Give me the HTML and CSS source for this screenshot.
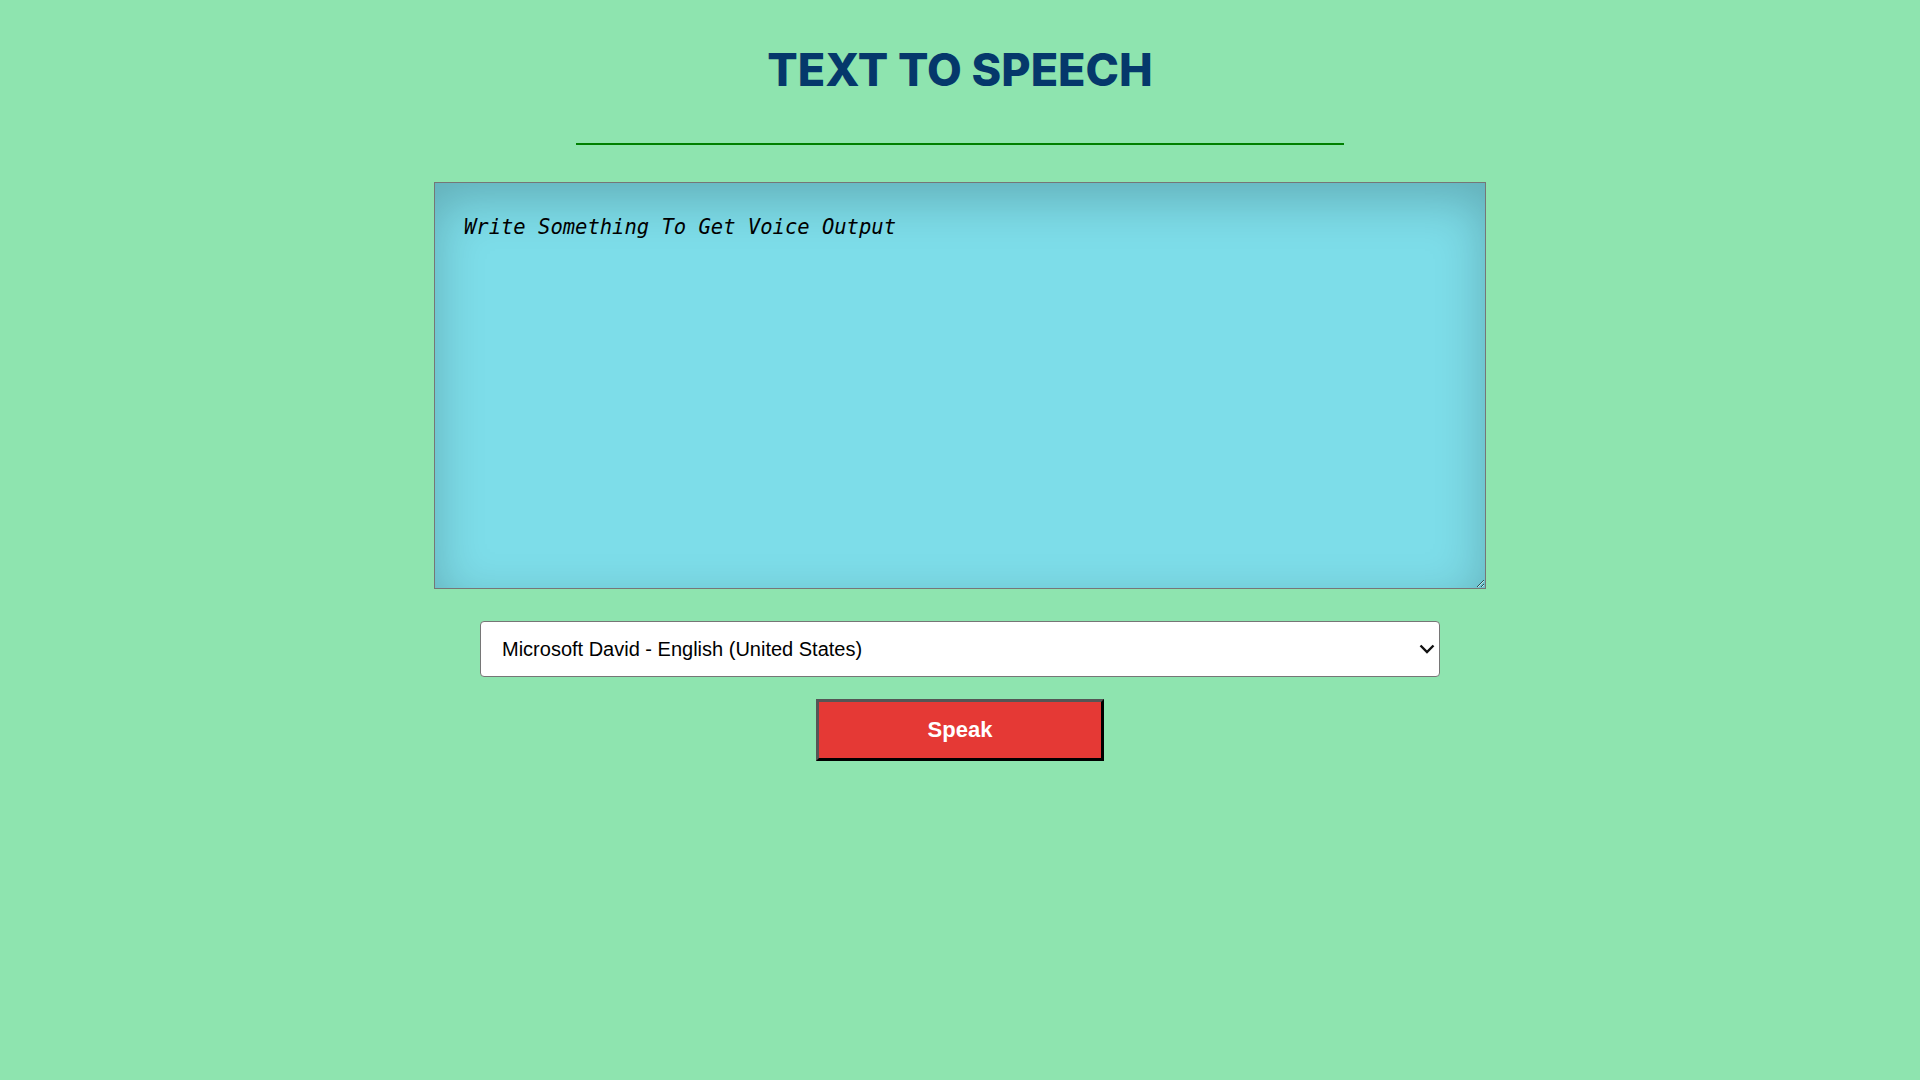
FILE: index.html
```html
<!DOCTYPE html>
<html lang="en">
<head>
<meta charset="utf-8">
<title>Text To Speech</title>
<link rel="stylesheet" href="styles.css">
</head>
<body>
<main class="app">
  <h1 class="title">TEXT TO SPEECH</h1>
  <hr class="divider">
  <textarea class="input" placeholder="Write Something To Get Voice Output"></textarea>
  <div class="select-wrap">
    <select class="voice">
      <option>Microsoft David - English (United States)</option>
      <option>Microsoft Mark - English (United States)</option>
      <option>Microsoft Zira - English (United States)</option>
    </select>
    <svg class="chevron" width="16" height="10" viewBox="0 0 16 10" aria-hidden="true">
      <path d="M1.5 1.5 L8 8 L14.5 1.5" fill="none" stroke="#111" stroke-width="2.4"/>
    </svg>
  </div>
  <button class="speak" type="button">Speak</button>
</main>
</body>
</html>
```

FILE: styles.css
```css
html, body {
  margin: 0;
  padding: 0;
  background: #8ee4af;
  height: 100%;
}

.app {
  display: flex;
  flex-direction: column;
  align-items: center;
  font-family: "Liberation Sans", Arial, sans-serif;
}

.title {
  margin: 42px 0 0;
  font-family: Inter, "Open Sans", sans-serif;
  font-weight: 800;
  font-size: 45px;
  line-height: 56px;
  letter-spacing: 0;
  color: #05386b;
}

.divider {
  width: 768px;
  height: 2px;
  margin: 45px 0 0;
  border: 0;
  background: #008000;
}

.input {
  box-sizing: border-box;
  width: 1052px;
  height: 407px;
  margin-top: 37px;
  padding: 32px 29px;
  border: 1px solid #767676;
  background: #7ddde9;
  box-shadow: inset 0 16px 50px rgba(0, 0, 0, 0.22);
  font-family: "DejaVu Sans Mono", monospace;
  font-style: italic;
  font-size: 20.5px;
  color: #000;
  outline: none;
  resize: both;
}

.input::placeholder {
  color: #000;
  opacity: 1;
}

.select-wrap {
  position: relative;
  margin-top: 32px;
}

.voice {
  display: block;
  box-sizing: border-box;
  width: 960px;
  height: 56px;
  padding: 0 40px 0 21px;
  appearance: none;
  -webkit-appearance: none;
  font-family: "Liberation Sans", Arial, sans-serif;
  font-size: 20px;
  color: #000;
  background: #fff;
  border: 1px solid #767676;
  border-radius: 4px;
}

.chevron {
  position: absolute;
  right: 5px;
  top: 23px;
  pointer-events: none;
}

.speak {
  box-sizing: border-box;
  width: 288px;
  height: 62px;
  margin-top: 22px;
  border: 3px solid;
  border-color: #555 #000 #000 #555;
  background: #e53935;
  color: #fff;
  font-family: "Liberation Sans", Arial, sans-serif;
  font-weight: bold;
  font-size: 22px;
  cursor: pointer;
}
```
